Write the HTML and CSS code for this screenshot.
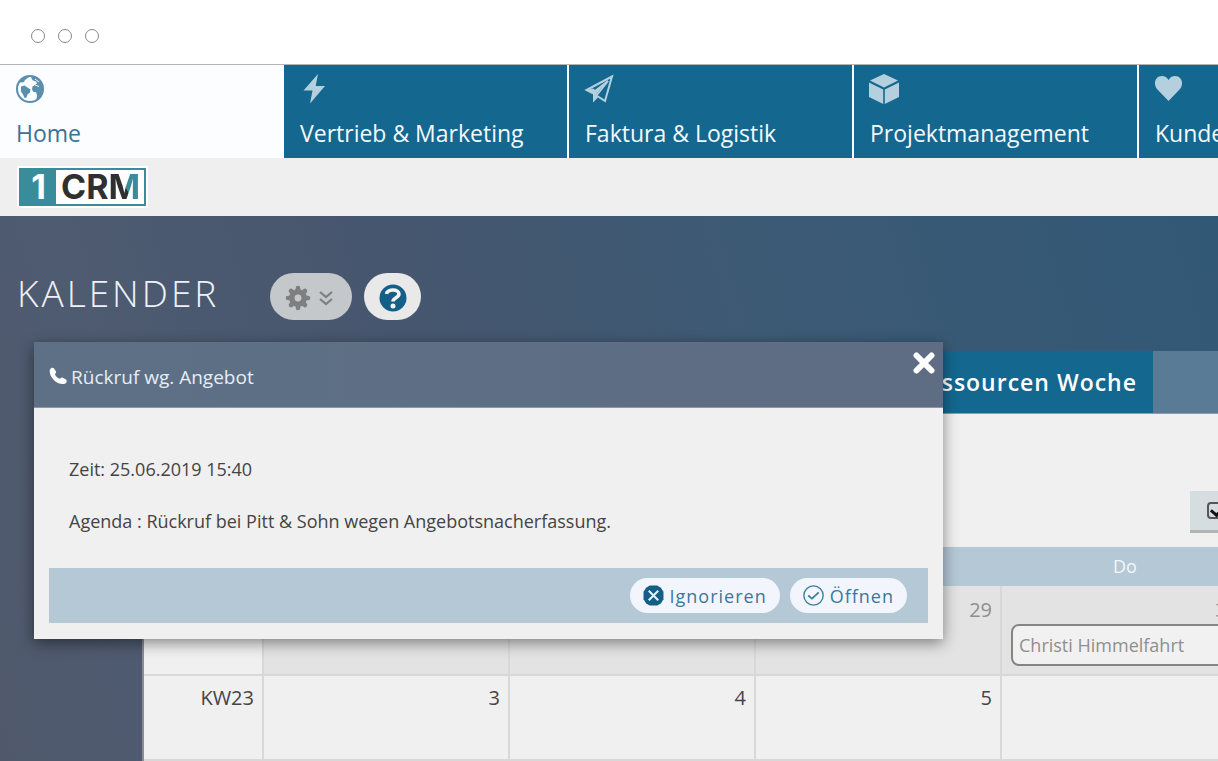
FILE: index.html
```html
<!DOCTYPE html>
<html lang="de">
<head>
<meta charset="utf-8">
<title>1CRM – Kalender</title>
<link rel="stylesheet" href="styles.css">
</head>
<body>
<div class="window-bar"><span class="dot"></span><span class="dot"></span><span class="dot"></span></div>

<nav class="modules">
  <a class="module module-active" href="#home">
    <svg class="module-icon" viewBox="0 0 30 30">
      <circle cx="15" cy="15" r="13" fill="#fbfdff" stroke="#5a8fae" stroke-width="2"/>
      <path fill="#5a8fae" d="M4 8.500 8 4l5-2.500 1 1.500-2 1.500-2 1.500-1 2-2.500.5zM16 2h4l5 4 3 5 .5 5-1.500 5-4 5-1.500-1 .5-3.500-1-3.500h-2.500L17 15.500l.5-3 3-2 1.500-1-1-2-3-1-1.500-2zM6 12.500l3.500-1 3 2 3 2-.5 3-2.500 2-1 3-2 .5L8 20.500l-2-3z"/>
      <path stroke="#fbfdff" stroke-width="1" fill="none" d="M20 5l4 3M20 11l4 1.500"/>
    </svg>
    <span>Home</span>
  </a>
  <a class="module" href="#vertrieb">
    <svg class="module-icon" viewBox="0 0 30 30"><path fill="#b4cfdd" d="M19 0 4.500 16.500h9L11 29.500 26 12h-9.300z"/></svg>
    <span>Vertrieb &amp; Marketing</span>
  </a>
  <a class="module" href="#faktura">
    <svg class="module-icon" viewBox="0 0 30 30"><path fill="none" stroke="#b4cfdd" stroke-width="2" stroke-linejoin="miter" d="M28 2.500 2.500 16l6 3L24 7 12.500 21.500l8.500 5.500z"/><path fill="#b4cfdd" d="M9 18.500 24 6 12 20.500l2 3-5 5zM2 16l7-1.500 3 2L9 20z"/></svg>
    <span>Faktura &amp; Logistik</span>
  </a>
  <a class="module" href="#projekt">
    <svg class="module-icon" viewBox="0 0 30 30"><path fill="#b4cfdd" d="M15 0 29 6.500 15 13.500 1 6.500zM0 8.500l14.200 7V30L0 23zM30 8.500l-14.200 7V30L30 23z"/></svg>
    <span>Projektmanagement</span>
  </a>
  <a class="module" href="#kunden">
    <svg class="module-icon" viewBox="0 0 30 30"><path fill="#b4cfdd" d="M14.500 27 3 15C-1 10 1 2 8 2c3 0 5 1.500 6.500 4C16 3.500 18 2 21 2c7 0 9 8 5 13z"/></svg>
    <span>Kundenservice</span>
  </a>
</nav>

<div class="brand-bar">
  <a class="logo" href="#start"><span class="logo-one">1</span><span class="logo-crm">CR<span class="logo-m">M</span></span></a>
</div>

<main class="workspace">
  <div class="title-row">
    <h1 class="title">KALENDER</h1>
    <button class="pill pill-settings" type="button" aria-label="Einstellungen">
      <svg class="gear" viewBox="0 0 26 26"><g fill="none" stroke="#7d7f81"><circle cx="13" cy="13" r="6.200" stroke-width="5.500"/><path stroke-width="4.600" stroke-linecap="round" d="M13 3v3M13 20v3M3 13h3M20 13h3M6 6l2 2M18 18l2 2M20 6l-2 2M8 18l-2 2"/></g></svg>
      <svg class="chevrons" viewBox="0 0 14 16"><path fill="none" stroke="#7d7f81" stroke-width="2.200" d="m1 2 6 5 6-5M1 9l6 5 6-5"/></svg>
    </button>
    <button class="pill pill-help" type="button" aria-label="Hilfe">
      <svg class="help" viewBox="0 0 28 28"><circle cx="14" cy="14" r="13.500" fill="#135f87"/><path fill="none" stroke="#f2f2f2" stroke-width="3.600" d="M7.500 10C8 5 20 4.500 20 10c0 4-6 3.500-6 7.500"/><circle cx="14" cy="22" r="2.500" fill="#f2f2f2"/></svg>
    </button>
  </div>

  <section class="calendar">
    <div class="views">
      <a class="view" href="#woche">Ressourcen Woche</a>
    </div>
    <div class="tools">
      <label class="filter"><input class="filter-box" type="checkbox" checked aria-label="Filter"></label>
    </div>
    <table class="month">
      <colgroup><col class="col-week"><col class="col-day"><col class="col-day"><col class="col-day"><col class="col-day"></colgroup>
      <thead><tr><th></th><th></th><th></th><th></th><th>Do</th></tr></thead>
      <tbody>
        <tr><td></td><td class="past"></td><td class="past"></td><td class="past">29</td><td class="past">30<a class="event" href="#event">Christi Himmelfahrt</a></td></tr>
        <tr><td>KW23</td><td>3</td><td>4</td><td>5</td><td></td></tr>
      </tbody>
    </table>
  </section>

  <section class="dialog" role="dialog" aria-labelledby="dialog-title">
    <header class="dialog-head">
      <svg class="phone" viewBox="0 0 18 18"><path fill="#fff" d="M1 2.500C2 .5 4 0 5 1.500l2 3c.6 1-.8 2-1 2.700.7 2 2.500 3.700 4.700 4.600.8-.2 1.600-1.700 2.700-1.200l3.600 1.900c1.500 1 .5 3.500-1 4.300C8.500 19-1 9.500 1 2.500z"/></svg>
      <h2 class="dialog-title" id="dialog-title">Rückruf wg. Angebot</h2>
      <button class="close" type="button" aria-label="Schließen"><svg class="close-icon" viewBox="0 0 22 22"><path stroke="#fff" stroke-width="6" stroke-linecap="round" d="m3.500 3.500 15 15m0-15-15 15"/></svg></button>
    </header>
    <div class="dialog-body">
      <p>Zeit: 25.06.2019 15:40</p>
      <p>Agenda : Rückruf bei Pitt &amp; Sohn wegen Angebotsnacherfassung.</p>
    </div>
    <footer class="dialog-foot">
      <button class="action" type="button"><svg class="action-icon" viewBox="0 0 20 20"><path fill="#135f87" d="M6.500.5h7l3.500 2 2.500 4v7l-2.500 4-3.500 2h-7L3 17.500l-2.500-4v-7L3 2.500z"/><path stroke="#e6f0f6" stroke-width="2" d="m5.500 5.500 9 9m0-9-9 9"/></svg>Ignorieren</button>
      <button class="action" type="button"><svg class="action-icon" viewBox="0 0 20 20"><circle cx="10" cy="10" r="9.200" fill="none" stroke="#3d7d9f" stroke-width="1.300"/><path fill="none" stroke="#3d7d9f" stroke-width="1.700" d="m5 10 3.500 3 6.500-6"/></svg>Öffnen</button>
    </footer>
  </section>
</main>
</body>
</html>
```

FILE: styles.css
```css
* { box-sizing: border-box; }

body {
  margin: 0;
  height: 100vh;
  display: flex;
  flex-direction: column;
  overflow: hidden;
  background: #fff;
  font-family: "Open Sans", "Noto Sans", sans-serif;
  font-size: 18px;
  color: #444;
}

a { color: inherit; text-decoration: none; }
button { font: inherit; border: 0; margin: 0; padding: 0; cursor: pointer; }
svg { display: block; flex: none; }

.window-bar {
  display: flex;
  align-items: center;
  gap: 13px;
  flex: none;
  height: 65px;
  padding: 7px 31px 0;
  border-bottom: 1px solid #b4b4b4;
}
.dot { width: 14px; height: 14px; border: 1px solid #888; border-radius: 50%; }

.modules {
  display: grid;
  grid-template-columns: 282px repeat(4, 283px);
  gap: 2px;
  flex: none;
  overflow: hidden;
  background: #fbfdff;
}
.module {
  display: flex;
  flex-direction: column;
  gap: 13px;
  height: 93px;
  padding: 9px 16px 0;
  background: #14678f;
  color: #f4f9fc;
  font-size: 23px;
  line-height: 32px;
  white-space: nowrap;
}
.module-active { background: #fbfdff; color: #3a7298; }
.module-icon { width: 30px; height: 30px; margin-left: -1px; }

.brand-bar {
  flex: none;
  height: 58px;
  padding: 8px 17px;
  background: #efefef;
}
.logo {
  display: inline-flex;
  border: 2px solid #fff;
  background: #398d9b;
  padding: 2px;
  font-family: Inter, sans-serif;
  font-weight: 700;
  font-size: 34px;
  line-height: 34px;
}
.logo-one { width: 35px; text-align: center; color: #fff; }
.logo-crm { padding: 0 4px 0 5px; background: #fff; color: #303030; }
.logo-m {
  background: linear-gradient(65deg, #303030 53%, #398d9b 53%);
  background-clip: text;
  -webkit-background-clip: text;
  color: transparent;
}

.workspace {
  position: relative;
  flex: 1;
  overflow: hidden;
  background: linear-gradient(75deg, #50596c 0%, #4e5b71 15%, #46566e 38%, #3d5a75 65%, #315875 100%);
}

.title-row {
  display: flex;
  align-items: flex-start;
  height: 135px;
  padding: 56px 17px 0;
}
.title {
  margin: 0 51px 0 0;
  font-size: 37px;
  line-height: 42px;
  font-weight: 300;
  letter-spacing: 3px;
  color: #eef2f8;
}
.pill {
  display: flex;
  align-items: center;
  justify-content: center;
  height: 47px;
  margin-top: 1px;
  border-radius: 24px;
}
.pill-settings { width: 82px; gap: 8px; padding-right: 4px; margin-right: 12px; background: #c5c8ca; }
.pill-help { width: 57px; background: #e9e9ea; }
.gear { width: 26px; height: 26px; margin-top: 3px; }
.chevrons { width: 14px; height: 16px; margin-top: 3px; }
.help { width: 28px; height: 28px; margin-top: 3px; }

.calendar {
  margin-left: 142px;
  min-height: 410px;
  overflow: hidden;
  border-left: 2px solid #8d8d8d;
  background: #f0f0f0;
}
.views {
  display: flex;
  height: 63px;
  border-bottom: 1px solid #8a9dad;
  background: #5a7b95;
}
.view {
  width: 1009px;
  padding-right: 16px;
  background: #14678f;
  color: #fff;
  font-size: 23px;
  font-weight: 600;
  line-height: 62px;
  letter-spacing: 1px;
  text-align: right;
}
.tools { height: 133px; padding: 77px 0 0 1046px; overflow: hidden; }
.filter {
  display: flex;
  align-items: center;
  height: 42px;
  width: 120px;
  padding-left: 17px;
  border-bottom: 3px solid #b4b4b4;
  background: #d5dde1;
}
.filter-box {
  appearance: none;
  width: 17px;
  height: 17px;
  margin: 0;
  border: 2px solid #555;
  border-radius: 4px;
  background: #d5dde1;
}
.filter-box:checked::before {
  content: "";
  display: block;
  width: 6px;
  height: 10px;
  margin: -1px 0 0 4px;
  border: solid #111;
  border-width: 0 3px 3px 0;
  rotate: 40deg;
}

.month {
  width: 1104px;
  table-layout: fixed;
  border-collapse: separate;
  border-spacing: 0;
}
.col-week { width: 120px; }
.col-day { width: 246px; }
.month th {
  height: 39px;
  padding: 0 0 2px;
  background: #b4c8d5;
  color: #f3f8fb;
  font-weight: 400;
}
.month td {
  height: 85px;
  padding: 9px 8px 0 9px;
  border-right: 2px solid #d8d8d8;
  border-bottom: 2px solid #d8d8d8;
  vertical-align: top;
  text-align: right;
  font-size: 20px;
  line-height: 25px;
}
.month tr:first-child td { height: 90px; padding-top: 11px; }
.month .past { background: #e3e3e3; color: #8f8f8f; }
.event {
  display: block;
  margin: 2px -8px 0 0;
  padding: 0 6px;
  border: 2px solid #858585;
  border-radius: 8px;
  background: #f1f1f1;
  font-size: 18px;
  line-height: 38px;
  text-align: left;
}

.dialog {
  position: absolute;
  left: 34px;
  top: 126px;
  width: 909px;
  background: #f0f0f0;
  box-shadow: 0 4px 14px rgba(0, 0, 0, 0.45);
}
.dialog-head {
  display: flex;
  align-items: center;
  gap: 4px;
  height: 66px;
  padding: 2px 8px 0 15px;
  border-bottom: 1px solid #8a98a8;
  background: linear-gradient(90deg, #5d7086, #5e6c84);
}
.phone { width: 18px; height: 18px; }
.dialog-title {
  flex: 1;
  margin: 0;
  padding-top: 3px;
  font-size: 19px;
  font-weight: 400;
  color: #e6edf4;
}
.close { align-self: flex-start; margin-top: 8px; background: none; }
.close-icon { width: 22px; height: 22px; }
.dialog-body { padding: 48px 35px 34px; }
.dialog-body p { margin: 0 0 26px; line-height: 26px; }
.dialog-body p:last-child { margin: 0; }
.dialog-foot {
  display: flex;
  align-items: center;
  justify-content: flex-end;
  gap: 10px;
  height: 55px;
  margin: 0 15px;
  padding: 0 21px;
  background: #b4c8d5;
}
.dialog::after { content: ""; display: block; height: 16px; }
.action {
  display: flex;
  align-items: center;
  gap: 6px;
  height: 35px;
  padding: 0 13px;
  border-radius: 18px;
  background: #f2f6fc;
  color: #39789b;
  font-size: 18px;
  letter-spacing: 1px;
}
.action-icon { width: 21px; height: 21px; }
```
